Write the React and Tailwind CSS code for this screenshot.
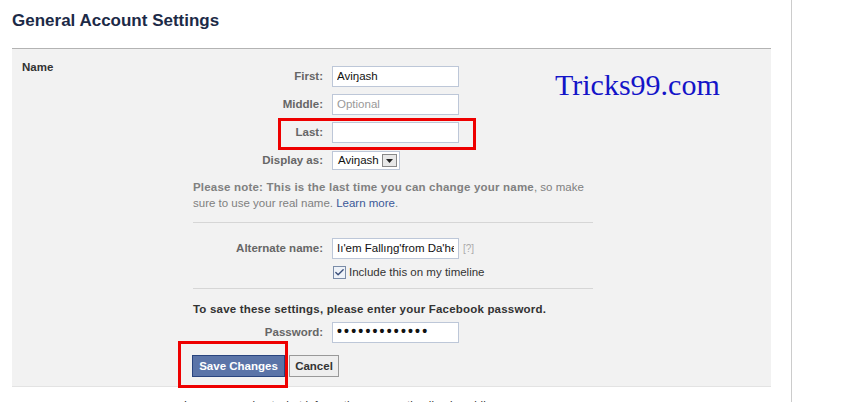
import { Check } from 'lucide-react';

const font = { fontFamily: '"Liberation Sans", Arial, sans-serif' };

function Field({ label, children }) {
  return (
    <div className="flex items-center h-[21px]">
      <label className="w-[139px] text-right pr-[9px] font-bold text-[#666] whitespace-nowrap">{label}</label>
      {children}
    </div>
  );
}

function TextBox({ value, placeholder, className = '' }) {
  return (
    <div
      className={`w-[127px] h-[21px] border border-[#bdc7d8] bg-white px-[4px] flex items-center overflow-hidden whitespace-nowrap ${className}`}
    >
      {value ? (
        <span className="text-[#111] min-w-0 overflow-hidden">{value}</span>
      ) : (
        <span className="text-[#999]">{placeholder}</span>
      )}
    </div>
  );
}

export default function App() {
  return (
    <div className="w-[792px] min-h-[402px] border-r border-[#ccc] pl-3 text-[11.5px] bg-white" style={font}>
      <h2 className="h-12 pt-[11px] text-[17px] leading-5 font-bold text-[#1c2a47]">General Account Settings</h2>

      <div className="relative w-[759px] flex bg-[#f2f2f2] border-t border-t-[#b3b3b3] border-b border-b-[#e3e3e3]">
        <div className="w-[181px] pl-[10px] pt-[10px] font-bold text-[#333]">Name</div>

        <div className="w-[400px] pt-[17px] pb-[9px]">
          <div className="flex flex-col gap-[7px]">
            <Field label="First:">
              <TextBox value="Aviŋash" />
            </Field>
            <Field label="Middle:">
              <TextBox placeholder="Optional" />
            </Field>
            <Field label="Last:">
              <TextBox />
            </Field>
            <div className="flex items-center h-[19px] mt-[1px]">
              <label className="w-[139px] text-right pr-[9px] font-bold text-[#666]">Display as:</label>
              <div className="h-[19px] w-[68px] border border-[#bdc7d8] bg-white flex items-center justify-between pl-[5px] pr-[2px]">
                <span className="text-[#111]">Aviŋash</span>
                <span className="w-[15px] h-[13px] border border-[#888] bg-[#e8e8e8] flex items-center justify-center">
                  <svg width="7" height="4" viewBox="0 0 7 4">
                    <path d="M0 0h7L3.5 4z" fill="#222" />
                  </svg>
                </span>
              </div>
            </div>
          </div>

          <p className="mt-[9px] leading-4 text-[#808080] w-[400px]">
            <b className="tracking-[0.2px]">Please note: This is the last time you can change your name</b>, so make
            <br />
            sure to use your real name. <span className="text-[#3b5998]">Learn more</span>.
          </p>

          <div className="mt-[11px] border-t border-[#d6d6d6]" />

          <div className="mt-[15px]">
            <Field label="Alternate name:">
              <TextBox value="Iı'em Fallıŋg'from Da'heıg" />
              <span className="ml-[4px] text-[#aaa] text-[10px]">[?]</span>
            </Field>
            <div className="flex items-center gap-[3px] pl-[140px] mt-[5px]">
              <span className="w-[13px] h-[13px] border border-[#7a8ca8] bg-[#eef2f8] flex items-center justify-center">
                <Check size={11} strokeWidth={3} className="text-[#3b4f7a]" />
              </span>
              <span className="text-[#333]">Include this on my timeline</span>
            </div>
          </div>

          <div className="mt-[7px] border-t border-[#d6d6d6]" />

          <p className="mt-[12px] font-bold text-[#333] leading-4 tracking-[0.2px]">
            To save these settings, please enter your Facebook password.
          </p>

          <div className="mt-[5px]">
            <Field label="Password:">
              <TextBox value={<span className="tracking-[2.2px] font-bold text-[14px] leading-none">•••••••••••••</span>} />
            </Field>
          </div>

          <div className="mt-[12px] flex gap-[4px] -ml-px">
            <button className="h-[22px] w-[93px] bg-[#5b74a8] border border-[#29447e] text-white font-bold">
              Save Changes
            </button>
            <button className="h-[22px] w-[50px] bg-[#eee] border border-[#999] text-[#333] font-bold">Cancel</button>
          </div>
        </div>

        <div
          className="absolute left-[543px] top-[18px] text-[30px] leading-9 text-[#1414c8]"
          style={{ fontFamily: '"Liberation Serif", "Times New Roman", serif' }}
        >
          Tricks99.com
        </div>

        <div className="absolute left-[266px] top-[69px] w-[198px] h-[32px] border-[3px] border-[#e00]" />
        <div className="absolute left-[166px] top-[292px] w-[110px] h-[47px] border-[3px] border-[#e00]" />
      </div>

      <p className="pl-[172px] pt-[10px] text-[#333]">Learn more about what information on your timeline is public.</p>
    </div>
  );
}
